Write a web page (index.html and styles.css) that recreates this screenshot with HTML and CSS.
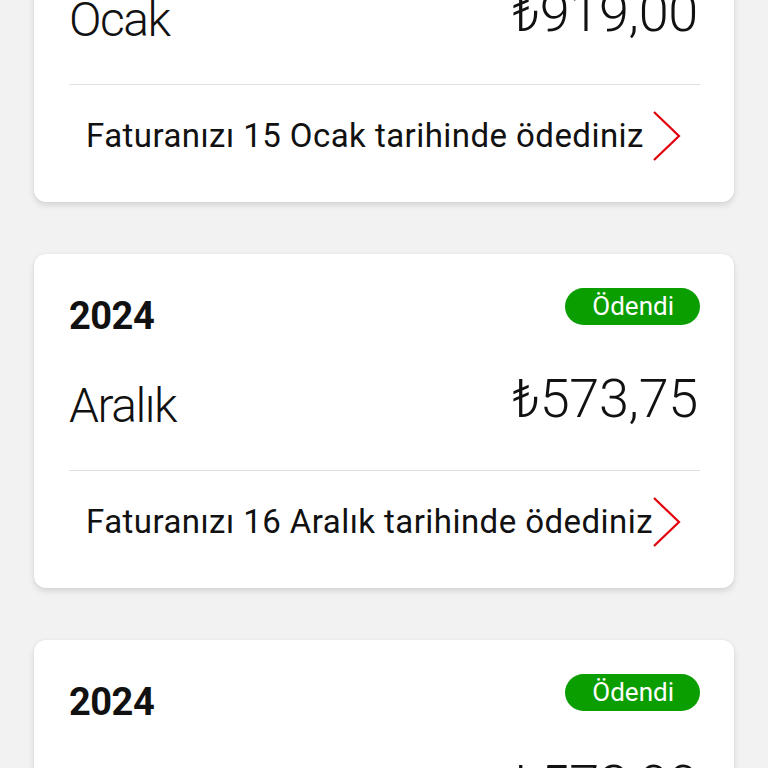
FILE: index.html
```html
<!DOCTYPE html>
<html lang="tr">
<head>
<meta charset="utf-8">
<link rel="stylesheet" href="styles.css">
</head>
<body>
<div class="list">
  <div class="card card-first">
    <div class="head">
      <span class="year">2025</span>
      <span class="badge">Ödendi</span>
    </div>
    <div class="amount-row">
      <span class="month">Ocak</span>
      <span class="amount">₺919,00</span>
    </div>
    <div class="divider"></div>
    <div class="foot">
      <span class="foot-text">Faturanızı 15 Ocak tarihinde ödediniz</span>
      <svg class="chev" width="28" height="50" viewBox="0 0 28 50"><path d="M1 1 L26 25 L1 49" fill="none" stroke="#e3000b" stroke-width="2.2"/></svg>
    </div>
  </div>
  <div class="card">
    <div class="head">
      <span class="year">2024</span>
      <span class="badge">Ödendi</span>
    </div>
    <div class="amount-row">
      <span class="month">Aralık</span>
      <span class="amount">₺573,75</span>
    </div>
    <div class="divider"></div>
    <div class="foot">
      <span class="foot-text">Faturanızı 16 Aralık tarihinde ödediniz</span>
      <svg class="chev" width="28" height="50" viewBox="0 0 28 50"><path d="M1 1 L26 25 L1 49" fill="none" stroke="#e3000b" stroke-width="2.2"/></svg>
    </div>
  </div>
  <div class="card">
    <div class="head">
      <span class="year">2024</span>
      <span class="badge">Ödendi</span>
    </div>
    <div class="amount-row">
      <span class="month">Kasım</span>
      <span class="amount">₺573,00</span>
    </div>
    <div class="divider"></div>
    <div class="foot">
      <span class="foot-text">Faturanızı 15 Kasım tarihinde ödediniz</span>
      <svg class="chev" width="28" height="50" viewBox="0 0 28 50"><path d="M1 1 L26 25 L1 49" fill="none" stroke="#e3000b" stroke-width="2.2"/></svg>
    </div>
  </div>
</div>
</body>
</html>
```
FILE: styles.css
```css
html, body {
  margin: 0;
  padding: 0;
  background: #f2f2f2;
  overflow: hidden;
  height: 768px;
}
body {
  font-family: Roboto, "Noto Sans", sans-serif;
  color: #111;
}
.list {
  display: flex;
  flex-direction: column;
  gap: 52px;
  padding: 0 34px;
  margin-top: -132px;
}
.card {
  background: #fff;
  border-radius: 12px;
  box-shadow: 0 3px 6px rgba(0,0,0,0.13), 0 0 2px rgba(0,0,0,0.06);
  padding: 34px 34px 0 35px;
  height: 334px;
  box-sizing: border-box;
}
.head {
  display: flex;
  justify-content: space-between;
  align-items: flex-start;
}
.year {
  font-weight: 700;
  font-size: 38px;
  line-height: 44px;
  margin-top: 6px;
  letter-spacing: -0.5px;
}
.badge {
  background: #0a9e00;
  color: #fff;
  height: 37px;
  line-height: 36px;
  border-radius: 19px;
  padding: 0 26px 0 27px;
  font-size: 26px;
  font-weight: 400;
}
.amount-row {
  display: flex;
  justify-content: space-between;
  align-items: flex-start;
  margin-top: 31px;
}
.month {
  font-weight: 300;
  font-size: 48px;
  line-height: 56px;
  margin-top: 9px;
  letter-spacing: -1.5px;
}
.amount {
  font-weight: 300;
  font-size: 54px;
  line-height: 60px;
  letter-spacing: -0.3px;
  margin-right: 2px;
}
.divider {
  height: 1px;
  background: #e0e0e0;
  margin-top: 36px;
}
.foot {
  display: flex;
  align-items: center;
  padding: 26px 19px 0 17px;
}
.foot-text {
  font-size: 33px;
  line-height: 40px;
  letter-spacing: 0.45px;
  white-space: nowrap;
  flex: 0 1 auto;
  min-width: 0;
}
.chev {
  display: block;
  flex: 0 0 28px;
  width: 28px;
  height: 50px;
  margin-left: auto;
}
```
